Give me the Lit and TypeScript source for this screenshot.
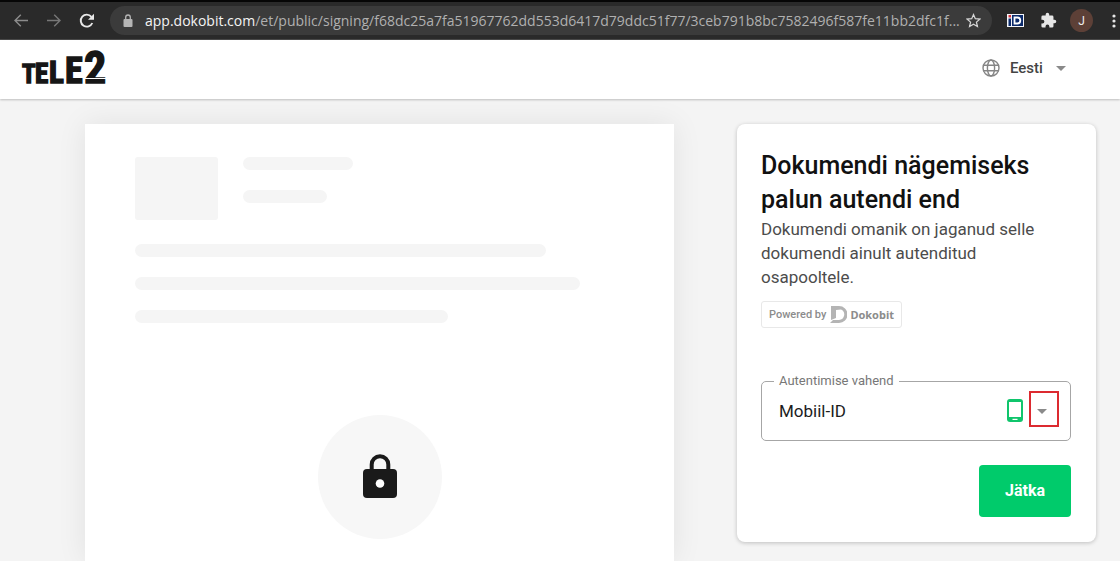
import { LitElement, html, css } from "lit";
import { customElement, state } from "lit/decorators.js";

const caret = html`<svg class="caret" viewBox="0 0 10 5" width="10" height="5" aria-hidden="true">
  <path d="M0 0h10L5 5z" fill="#8a8a8a" />
</svg>`;

@customElement("browser-bar")
export class BrowserBar extends LitElement {
  static styles = css`
    :host {
      display: block;
      box-sizing: border-box;
      height: 40px;
      background: #2a2a2a;
      border-top: 2px solid #060606;
      border-bottom: 1px solid #4a4a4a;
      font-family: "Open Sans", "Noto Sans", sans-serif;
    }
    .bar {
      display: flex;
      align-items: center;
      height: 100%;
      padding-left: 4px;
      box-sizing: border-box;
    }
    button {
      display: flex;
      align-items: center;
      justify-content: center;
      flex: none;
      box-sizing: border-box;
      width: 33px;
      height: 28px;
      margin: 0;
      padding: 0;
      border: 0;
      background: none;
    }
    .nav {
      display: flex;
    }
    .omnibox {
      display: flex;
      align-items: center;
      flex: 1;
      min-width: 0;
      height: 29px;
      margin-left: 7px;
      padding-left: 12px;
      border-radius: 15px;
      background: #3b3b3b;
    }
    .lock {
      flex: none;
      margin-right: 11px;
    }
    .url {
      flex: 1;
      min-width: 0;
      overflow: hidden;
      text-overflow: ellipsis;
      white-space: nowrap;
      font-size: 14px;
      line-height: 24px;
      color: #b0b0b0;
      text-decoration: none;
    }
    .host {
      color: #f4f4f4;
    }
    .star {
      width: 32px;
      padding-right: 5px;
    }
    .tools {
      display: flex;
      align-items: center;
      flex: none;
      margin-left: 7px;
    }
    .avatar {
      display: flex;
      align-items: center;
      justify-content: center;
      width: 23px;
      height: 23px;
      border-radius: 50%;
      background: #5d4037;
      color: #eee;
      font: 12px Roboto, sans-serif;
    }
    .more {
      width: 22px;
      padding-left: 10px;
    }
  `;

  render() {
    return html`
      <div class="bar">
        <div class="nav">
          <button aria-label="Back">
            <svg width="14" height="13" viewBox="0 0 14 13" fill="none" stroke="#8c8c8c" stroke-width="1.4"><path d="M14 6.5H1M6.8.7 1 6.5l5.8 5.8" /></svg>
          </button>
          <button aria-label="Forward">
            <svg width="14" height="13" viewBox="0 0 14 13" fill="none" stroke="#777" stroke-width="1.4"><path d="M0 6.5h13M7.2.7 13 6.5l-5.8 5.8" /></svg>
          </button>
          <button aria-label="Reload">
            <svg width="16" height="16" viewBox="0 0 16 16"><path d="M13.3 10a6 6 0 1 1-.9-6.2" fill="none" stroke="#e8e8e8" stroke-width="1.9" /><path d="M15 .8v6H9z" fill="#e8e8e8" /></svg>
          </button>
        </div>
        <div class="omnibox">
          <svg class="lock" width="12" height="13" viewBox="0 0 12 13"><rect x="1.5" y="5" width="9" height="8" rx="1" fill="#b5b5b5" /><path d="M3.7 5.5V3.3a2.3 2.3 0 0 1 4.6 0v2.2" fill="none" stroke="#b5b5b5" stroke-width="1.3" /></svg>
          <a class="url" href="#"><span class="host">app.dokobit.com</span>/et/public/signing/f68dc25a7fa51967762dd553d6417d79ddc51f77/3ceb791b8bc7582496f587fe11bb2dfc1f...</a>
          <button class="star" aria-label="Bookmark">
            <svg width="15" height="15" viewBox="0 0 24 24" fill="none" stroke="#d5d5d5" stroke-width="2"><path d="m12 2.5 2.9 6.6 7.2.7-5.4 4.8 1.6 7.1L12 18l-6.3 3.7 1.6-7.1L1.9 9.8l7.2-.7z" /></svg>
          </button>
        </div>
        <div class="tools">
          <button aria-label="ID extension">
            <svg width="17" height="13" viewBox="0 0 17 13"><rect width="17" height="13" fill="#f5f6fa" /><rect x="5" y="1" width="11" height="11" fill="#0b2a6b" /><rect x="1.5" y="4.5" width="2.5" height="7.5" fill="#0b2a6b" /><rect x="1.5" y="1" width="2.5" height="2.5" fill="#d8323c" /><path d="M7.5 3.5h2.8a3 3 0 0 1 0 6H7.5z" fill="none" stroke="#fff" stroke-width="1.8" /></svg>
          </button>
          <button aria-label="Extensions">
            <svg width="17" height="17" viewBox="0 0 24 24"><path d="M20.5 11H19V7a2 2 0 0 0-2-2h-4V3.5a2.5 2.5 0 0 0-5 0V5H4a2 2 0 0 0-2 2v3.8h1.5a2.7 2.7 0 0 1 0 5.4H2V20a2 2 0 0 0 2 2h3.8v-1.5a2.7 2.7 0 0 1 5.4 0V22H17a2 2 0 0 0 2-2v-4h1.5a2.5 2.5 0 0 0 0-5z" fill="#e6e6e6" /></svg>
          </button>
          <button aria-label="Profile"><span class="avatar">J</span></button>
          <button class="more" aria-label="Menu">
            <svg width="4" height="14" viewBox="0 0 4 14" fill="#e6e6e6"><circle cx="2" cy="2" r="1.6" /><circle cx="2" cy="7" r="1.6" /><circle cx="2" cy="12" r="1.6" /></svg>
          </button>
        </div>
      </div>
    `;
  }
}

@customElement("site-header")
export class SiteHeader extends LitElement {
  static styles = css`
    :host {
      display: flex;
      align-items: center;
      justify-content: space-between;
      box-sizing: border-box;
      height: 59px;
      padding: 0 54px 3px 20px;
      background: #fff;
      box-shadow: 0 1px 2px rgba(0, 0, 0, 0.22);
      position: relative;
    }
    .logo {
      display: block;
      overflow: visible;
    }
    .logo text {
      font-family: "Liberation Sans Narrow", "Roboto Condensed", "Liberation Sans", sans-serif;
      font-weight: 700;
    }
    .language {
      display: grid;
      grid-template-columns: 18px 60px;
      column-gap: 6px;
      align-items: center;
    }
    select {
      grid-area: 1 / 2;
      appearance: none;
      margin: 0;
      padding: 0 0 0 4px;
      border: 0;
      background: none;
      color: #444;
      font: 500 15px/24px Roboto, sans-serif;
    }
    .caret {
      grid-area: 1 / 2;
      justify-self: end;
      pointer-events: none;
    }
  `;

  render() {
    return html`
      <svg class="logo" width="88" height="36" viewBox="0 0 88 36" role="img" aria-label="TELE2">
        <g fill="#161616" stroke="#161616" stroke-width="1.4">
          <text x="2" y="33" font-size="25">T</text>
          <text x="15" y="33" font-size="27">E</text>
          <text x="29" y="33" font-size="31">L</text>
          <text x="45" y="33" font-size="36">E</text>
          <text x="64" y="33" font-size="44">2</text>
        </g>
        <path d="M64 28.500h22" stroke="#fff" stroke-width="1" />
      </svg>
      <label class="language">
        <svg width="18" height="18" viewBox="0 0 18 18" fill="none" stroke="#858585" stroke-width="1.4" aria-hidden="true">
          <circle cx="9" cy="9" r="8" /><ellipse cx="9" cy="9" rx="3.6" ry="8" /><path d="M1.5 6.2h15M1.5 11.8h15" />
        </svg>
        <select aria-label="Keel"><option>Eesti</option></select>
        ${caret}
      </label>
    `;
  }
}

@customElement("document-preview")
export class DocumentPreview extends LitElement {
  static styles = css`
    :host {
      display: block;
      background: #fff;
      box-shadow: 0 0 28px rgba(0, 0, 0, 0.08);
      padding: 33px 50px 0;
    }
    .head {
      display: flex;
      gap: 25px;
    }
    .thumb {
      width: 83px;
      height: 63px;
      border-radius: 3px;
      background: #f5f5f5;
    }
    .lines {
      display: flex;
      flex-direction: column;
      gap: 20px;
      flex: 1;
    }
    .body {
      margin-top: 24px;
    }
    .bar {
      height: 13px;
      border-radius: 7px;
      background: #f5f5f5;
    }
    .badge {
      display: flex;
      align-items: center;
      justify-content: center;
      box-sizing: border-box;
      width: 124px;
      height: 124px;
      margin: 92px auto 0;
      padding-bottom: 2px;
      border-radius: 50%;
      background: #f7f7f7;
    }
  `;

  private bars(widths: number[]) {
    return widths.map((w) => html`<div class="bar" style="width:${w}%"></div>`);
  }

  render() {
    return html`
      <div class="head">
        <div class="thumb"></div>
        <div class="lines">${this.bars([29, 22])}</div>
      </div>
      <div class="lines body">${this.bars([84, 91, 64])}</div>
      <div class="badge">
        <svg width="34" height="44" viewBox="0 0 34 44" role="img" aria-label="Lukus">
          <path d="M8.7 16V10.5a8.3 8.3 0 0 1 16.6 0V16" fill="none" stroke="#1a1a1a" stroke-width="4" />
          <rect y="15" width="34" height="29" rx="4" fill="#1a1a1a" />
          <circle cx="17" cy="29.5" r="4.3" fill="#fff" />
        </svg>
      </div>
    `;
  }
}

@customElement("auth-card")
export class AuthCard extends LitElement {
  static styles = css`
    :host {
      display: block;
      padding: 25px 25px 25px 24px;
      border-radius: 8px;
      background: #fff;
      box-shadow: 0 1px 4px rgba(0, 0, 0, 0.22);
      font-family: Roboto, sans-serif;
    }
    h1 {
      margin: 0;
      font-size: 25px;
      font-weight: 500;
      line-height: 34px;
      color: #111;
    }
    p {
      margin: 0 0 12px;
      font-size: 17px;
      line-height: 24px;
      color: #4c4c4c;
    }
    .powered {
      display: inline-flex;
      align-items: center;
      gap: 4px;
      height: 25px;
      padding: 0 7px;
      border: 1px solid #e8e8e8;
      border-radius: 3px;
      color: #8c8c8c;
      font-size: 11px;
      font-weight: 500;
      text-decoration: none;
      vertical-align: top;
    }
    .brand {
      display: flex;
      align-items: center;
      gap: 3px;
      font-family: "Noto Sans", sans-serif;
      font-size: 11px;
      font-weight: 700;
    }
    fieldset {
      margin: 45px 0 24px;
      min-width: 0;
      padding: 0 11px 0 12px;
      border: 1px solid #a6a6a6;
      border-radius: 5px;
    }
    legend {
      padding: 0 5px;
      font-size: 13px;
      line-height: 16px;
      color: #777;
    }
    .field {
      display: grid;
      grid-template-columns: 1fr auto 30px;
      column-gap: 6px;
      align-items: center;
      height: 51px;
    }
    select {
      grid-area: 1 / 1 / 2 / 4;
      appearance: none;
      width: 100%;
      height: 36px;
      margin: 0 0 8px;
      padding: 0 0 0 5px;
      border: 0;
      background: none;
      color: #1c1c1c;
      font: 17px/24px Roboto, sans-serif;
    }
    .phone {
      grid-area: 1 / 2;
      margin-bottom: 8px;
      pointer-events: none;
    }
    .marker {
      grid-area: 1 / 3;
      display: flex;
      align-items: center;
      justify-content: center;
      box-sizing: border-box;
      width: 30px;
      height: 36px;
      margin-bottom: 12px;
      padding: 5px 4px 0 0;
      border: 2px solid #dc2a30;
      pointer-events: none;
    }
    .actions {
      display: flex;
      justify-content: flex-end;
    }
    .submit {
      height: 52px;
      padding: 0 26px;
      border: 0;
      border-radius: 4px;
      background: #00cb6b;
      color: #fff;
      font: 700 16px/24px Roboto, sans-serif;
    }
  `;

  @state() private method = "Mobiil-ID";

  render() {
    return html`
      <h1>Dokumendi nägemiseks palun autendi end</h1>
      <p>Dokumendi omanik on jaganud selle dokumendi ainult autenditud osapooltele.</p>
      <a class="powered" href="#">
        <span>Powered by</span>
        <span class="brand">
          <svg width="17" height="17" viewBox="0 0 17 17" aria-hidden="true">
            <path d="M1 0h8a8.5 8.5 0 0 1 0 17H0l3-3h6a5.5 5.5 0 0 0 2-10.5L6 4v8l-5 2z" fill="#b4b4b4" />
          </svg>
          Dokobit
        </span>
      </a>
      <fieldset>
        <legend><label for="method">Autentimise vahend</label></legend>
        <div class="field">
          <select id="method" @change=${(e: Event) => (this.method = (e.target as HTMLSelectElement).value)}>
            <option ?selected=${this.method === "Mobiil-ID"}>Mobiil-ID</option>
          </select>
          <svg class="phone" width="16" height="23" viewBox="0 0 16 23" aria-hidden="true">
            <rect width="16" height="23" rx="3" fill="#10c56c" /><rect x="2" y="3" width="12" height="15" fill="#fff" /><rect x="5.5" y="19.8" width="5" height="1.2" fill="#fff" />
          </svg>
          <span class="marker">${caret}</span>
        </div>
      </fieldset>
      <div class="actions"><button class="submit" type="submit">Jätka</button></div>
    `;
  }
}

@customElement("app-root")
export class AppRoot extends LitElement {
  static styles = css`
    :host {
      display: flex;
      flex-direction: column;
      height: 100vh;
      overflow: hidden;
      background: #f4f4f4;
    }
    browser-bar,
    site-header {
      flex: none;
    }
    main {
      flex: 1;
      display: grid;
      grid-template-columns: minmax(0, 1fr) minmax(0, 359px);
      column-gap: 63px;
      padding: 25px 24px 0 85px;
    }
    auth-card {
      align-self: start;
    }
  `;

  render() {
    return html`
      <browser-bar></browser-bar>
      <site-header></site-header>
      <main>
        <document-preview></document-preview>
        <auth-card></auth-card>
      </main>
    `;
  }
}
